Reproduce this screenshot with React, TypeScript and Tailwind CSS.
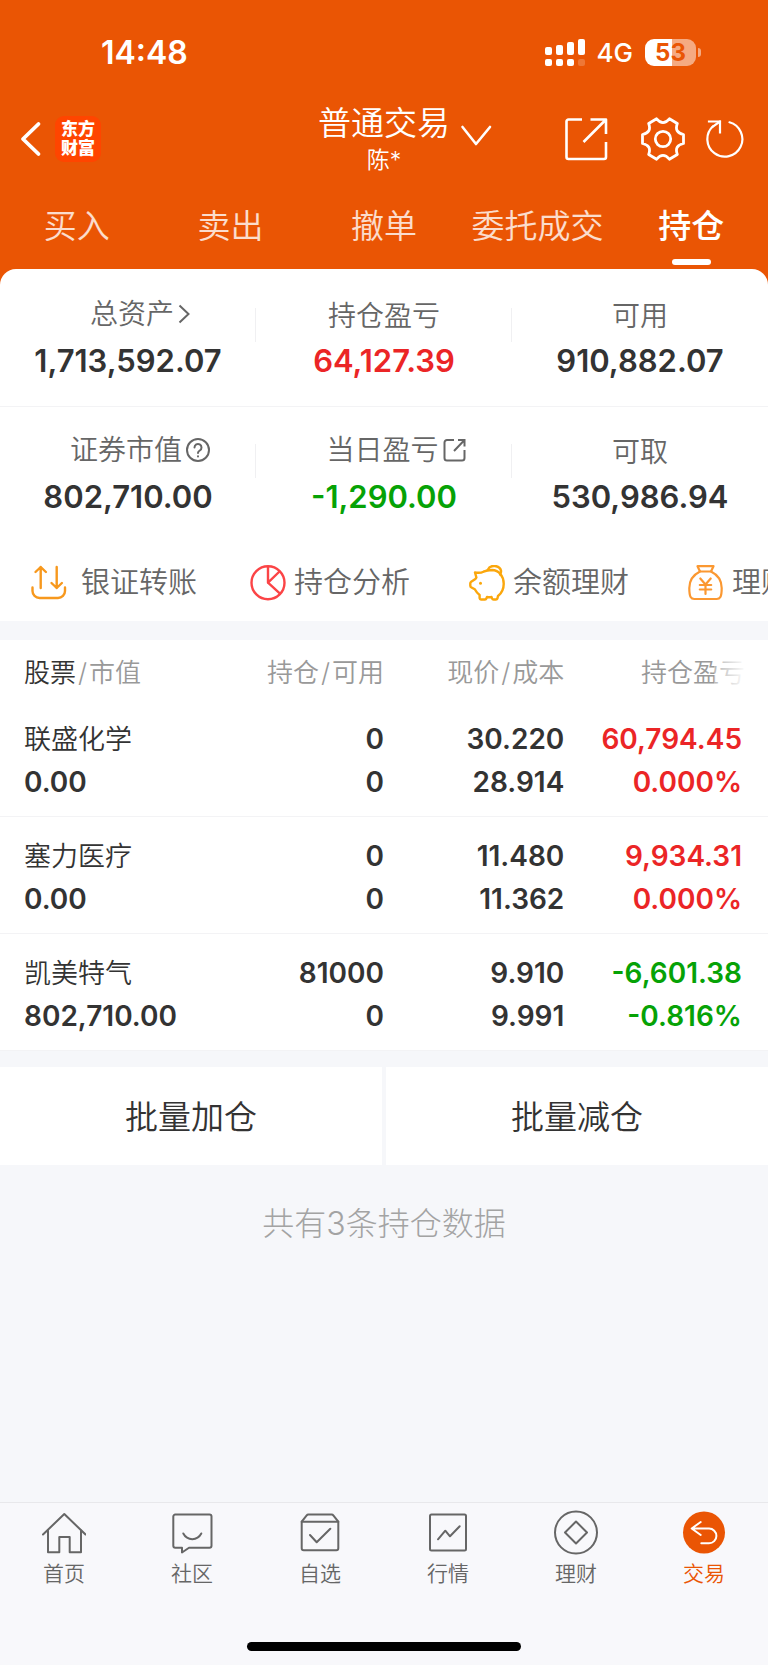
import type { ReactNode } from 'react'

type Tone = 'up' | 'down' | 'flat'

const toneClass: Record<Tone, string> = {
  up: 'text-[#eb2526]',
  down: 'text-[#06a206]',
  flat: 'text-[#333333]',
}

const tabs = ['买入', '卖出', '撤单', '委托成交', '持仓']

const holdings: {
  name: string
  value: string
  shares: string
  available: string
  price: string
  cost: string
  profit: string
  rate: string
  tone: Tone
}[] = [
  {
    name: '联盛化学',
    value: '0.00',
    shares: '0',
    available: '0',
    price: '30.220',
    cost: '28.914',
    profit: '60,794.45',
    rate: '0.000%',
    tone: 'up',
  },
  {
    name: '塞力医疗',
    value: '0.00',
    shares: '0',
    available: '0',
    price: '11.480',
    cost: '11.362',
    profit: '9,934.31',
    rate: '0.000%',
    tone: 'up',
  },
  {
    name: '凯美特气',
    value: '802,710.00',
    shares: '81000',
    available: '0',
    price: '9.910',
    cost: '9.991',
    profit: '-6,601.38',
    rate: '-0.816%',
    tone: 'down',
  },
]

const quickLinks = [
  { label: '银证转账', gap: 'gap-[14px]', icon: <TransferIcon /> },
  { label: '持仓分析', gap: 'gap-2', icon: <PieIcon /> },
  { label: '余额理财', gap: 'gap-2', icon: <PigIcon /> },
  { label: '理财', gap: 'gap-2', icon: <BagIcon /> },
]

const navItems = [
  {
    label: '首页',
    icon: (
      <>
        <path d="M1 24.5 22.3 4 43.5 24.5" />
        <path d="M6 20.5V42.3h11.3V27h10.4v15.3H39V20.5" />
      </>
    ),
  },
  {
    label: '社区',
    icon: (
      <>
        <path d="M5 4.5h34.500a2 2 0 0 1 2 2v29.200a2 2 0 0 1-2 2H19l-7 4.800v-4.800H5.300a2 2 0 0 1-2-2V6.500a2 2 0 0 1 2-2z" />
        <path d="M13.300 23.500c4 7.500 14 7.500 18 0" />
      </>
    ),
  },
  {
    label: '自选',
    icon: (
      <>
        <path d="M3.700 11.700 8.700 5.300a2 2 0 0 1 1.600-.8h23.400a2 2 0 0 1 1.600.8l5 6.400v26.600a2 2 0 0 1-2 2H5.700a2 2 0 0 1-2-2z" />
        <path d="M3.700 11.700h36.600M12 25l6.700 7.300 13.600-13.600" />
      </>
    ),
  },
  {
    label: '行情',
    icon: (
      <>
        <rect x="4" y="4.500" width="36" height="36" rx="1.500" />
        <path d="M12 29.300l7.300-8.600 4.700 5.600 9.700-10" />
      </>
    ),
  },
  {
    label: '理财',
    icon: (
      <>
        <circle cx="22" cy="22.500" r="21" />
        <path d="M22 11.500 33 22.500 22 33.500 11 22.500z" />
      </>
    ),
  },
  {
    label: '交易',
    active: true,
    icon: (
      <>
        <circle cx="22" cy="22.500" r="21" fill="#ea5504" stroke="none" />
        <path
          d="M18.700 12 9.700 18.500 18.700 25M9.700 18.500h17.300a7.400 7.400 0 0 1 0 14.800h-7.700"
          stroke="#ffffff"
        />
      </>
    ),
  },
]

function TransferIcon() {
  return (
    <svg width="36" height="36" viewBox="0 0 36 36" fill="none" stroke="#f7981d" strokeWidth="2.400" strokeLinecap="round" strokeLinejoin="round">
      <path d="M1.500 22.500v3.500a7 7 0 0 0 7 7h18.500a7 7 0 0 0 7-7v-3.500" />
      <path d="M9.700 23V2M4.500 7l5.200-5 5.200 5M25.700 2v21M20.500 18l5.200 5 5.200-5" />
    </svg>
  )
}

function PieIcon() {
  return (
    <svg width="36" height="36" viewBox="0 0 36 36" fill="none" stroke="#fb4446" strokeWidth="2.400" strokeLinejoin="round">
      <circle cx="18" cy="17.700" r="16.500" />
      <path d="M18 1.200v16.500L29.500 6.500M18 17.700l12 11" />
    </svg>
  )
}

function PigIcon() {
  return (
    <svg width="36" height="36" viewBox="0 0 36 36" fill="none" stroke="#fba70c" strokeWidth="2.400" strokeLinecap="round" strokeLinejoin="round">
      <path d="M6 7.500c3 .4 6 .5 8.500-.8C17 5.500 20 5 23 5c7 .3 11.500 6 11.700 13.500.1 5-2 9.500-5.700 12.500l-.6 2.500c-.3.800-.8 1-1.500 1h-2.400c-.8 0-1.200-.4-1.500-1.200l-.5-1.300c-1.500.3-3 .3-4.500 0l-.5 1.300c-.3.800-.7 1.200-1.500 1.200h-4c-.8 0-1.300-.5-1.400-1.300L10.600 30C8.500 28.500 7 26.500 5.800 24.300L2.500 22.500c-.8-.4-1.200-1-1.200-1.800v-2.400c0-.7.300-1.200.9-1.600L6 14.300c.5-.4 1-1 1.400-1.800z" />
      <path d="M18.700 4.900a7 6.200 0 0 1 13.400 1.100c0 1.400-.3 2.400-1 3.400" />
      <circle cx="11.500" cy="18.300" r="1.500" fill="#fba70c" stroke="none" />
    </svg>
  )
}

function BagIcon() {
  return (
    <svg width="36" height="36" viewBox="0 0 36 36" fill="none" stroke="#fb9831" strokeWidth="2.200" strokeLinecap="round" strokeLinejoin="round">
      <path d="M9.500 1.200h16l-2.500 5.300H12z" />
      <path d="M12 6.500C5 10 1.300 16 1.300 23c0 4 .3 7.200 1.300 9 .8 1.500 1.900 2 3.700 2h22.400c1.800 0 2.900-.5 3.700-2 1-1.800 1.300-5 1.300-9 0-7-3.700-13-10.700-16.500" />
      <path d="M12.300 13.500l5.200 6 5.200-6M17.500 19.500v9.500M11.800 20h11.400M11.800 24.500h11.400" />
    </svg>
  )
}

function StatusBar() {
  return (
    <div className="flex h-[100px] items-center justify-between pl-[101px] pr-[67px] pt-[5px] text-white">
      <span className="text-[32px] font-semibold leading-none">14:48</span>
      <div className="flex items-center">
        <svg width="40" height="28" viewBox="0 0 40 28" fill="#ffffff">
          <rect x="0" y="8" width="7" height="8" rx="2" />
          <rect x="11" y="6" width="7" height="10" rx="2" />
          <rect x="22" y="3" width="7" height="13" rx="2" />
          <rect x="33" y="0" width="7" height="16" rx="2" />
          <rect x="0" y="20" width="7" height="7" rx="2" />
          <rect x="11" y="20" width="7" height="7" rx="2" />
          <rect x="22" y="20" width="7" height="7" rx="2" />
          <rect x="33" y="20" width="7" height="7" rx="2" opacity="0.200" />
        </svg>
        <span className="ml-3 text-[26px] font-medium leading-none">4G</span>
        <span className="ml-3 flex h-[27px] w-[51px] items-center justify-center rounded-[9px] bg-linear-to-r from-white from-53% to-[#f5aa82] to-53% text-[24px] font-bold leading-none text-[#ea5504]">
          53
        </span>
        <span className="ml-[2px] h-[9px] w-[3px] rounded-r-full bg-[#f5aa82]" />
      </div>
    </div>
  )
}

function Header() {
  return (
    <header className="grid h-[76px] grid-cols-[1fr_auto_1fr] items-center text-white">
      <div className="flex items-center pl-5">
        <button type="button" aria-label="返回">
          <svg width="22" height="36" viewBox="0 0 22 36" fill="none" stroke="currentColor" strokeWidth="3.800" strokeLinecap="round" strokeLinejoin="round">
            <path d="M18.500 3 3 18l15.500 15" />
          </svg>
        </button>
        <div className="ml-[13px] flex size-[46px] flex-col items-center justify-center rounded-[9px] bg-[#ff4500] text-[17px] font-black leading-[19px]">
          <span>东方</span>
          <span>财富</span>
        </div>
      </div>
      <div className="flex flex-col items-center pt-[3px]">
        <h1 className="text-[33px] leading-[40px]">普通交易</h1>
        <p className="text-[23px] leading-[34px]">陈*</p>
      </div>
      <div className="flex items-center justify-between pl-[10px] pr-[23px]">
        <button type="button" aria-label="切换账户">
          <svg width="32" height="22" viewBox="0 0 32 22" fill="none" stroke="currentColor" strokeWidth="2.600" strokeLinecap="round" strokeLinejoin="round" className="mb-2">
            <path d="M2.500 3 16 20 30 3" />
          </svg>
        </button>
        <div className="flex items-center">
          <button type="button" aria-label="分享">
            <svg width="43" height="44" viewBox="0 0 43 44" fill="none" stroke="currentColor" strokeWidth="2.600" strokeLinejoin="round">
              <path d="M17 2.500H3.500a2 2 0 0 0-2 2V40a2 2 0 0 0 2 2H39a2 2 0 0 0 2-2V25" />
              <path d="M25.500 2.500H41V17M41 2.500 18.500 25" />
            </svg>
          </button>
          <button type="button" aria-label="设置" className="ml-[33px]">
            <svg width="44" height="44" viewBox="0 0 44 44" fill="none" stroke="currentColor" strokeWidth="2.800" strokeLinejoin="round">
              <path d="M42.500 17.500v9Q33 28.400 36.300 37.500L28.400 42.200Q22 34.700 15.600 42.200L7.700 37.500Q11 28.400 1.500 26.500v-9Q11 15.600 7.700 6.500L15.600 1.800Q22 9.300 28.400 1.800L36.300 6.500Q33 15.600 42.500 17.500Z" />
              <circle cx="22" cy="22" r="7.700" />
            </svg>
          </button>
          <button type="button" aria-label="刷新" className="ml-5">
            <svg width="40" height="42" viewBox="0 0 40 42" fill="none" stroke="currentColor" strokeWidth="2.200" strokeLinecap="round">
              <path d="M24.500 4.300A17.500 17.500 0 1 1 8 8.300" />
              <path d="M4 3.500h11v11" strokeLinecap="square" />
              <path d="M15 3.500 7.500 8.800" />
            </svg>
          </button>
        </div>
      </div>
    </header>
  )
}

function Stat({
  label,
  value,
  tone = 'flat',
  icon,
  divider = true,
}: {
  label: string
  value: string
  tone?: Tone
  icon?: ReactNode
  divider?: boolean
}) {
  return (
    <div className="relative flex flex-col items-center">
      <div className={`flex h-9 items-center gap-1 text-[28px] text-[#666666] ${icon ? 'pl-6' : 'pt-1'}`}>
        {label}
        {icon}
      </div>
      <p className={`mt-[7px] text-[31px] font-semibold leading-[44px] ${toneClass[tone]}`}>{value}</p>
      {divider && <span className="absolute right-0 top-3 h-[34px] w-px bg-[#f0f0f2]" />}
    </div>
  )
}

function Summary() {
  return (
    <section>
      <div className="grid h-[138px] grid-cols-3 border-b border-[#f3f3f5] pt-[27px]">
        <Stat
          label="总资产"
          value="1,713,592.07"
          icon={
            <svg width="12" height="20" viewBox="0 0 12 20" fill="none" stroke="currentColor" strokeWidth="2">
              <path d="M1.500 1.500 10.500 10l-9 8.500" />
            </svg>
          }
        />
        <Stat label="持仓盈亏" value="64,127.39" tone="up" />
        <Stat label="可用" value="910,882.07" divider={false} />
      </div>
      <div className="grid h-[134px] grid-cols-3 pt-[25px]">
        <Stat
          label="证券市值"
          value="802,710.00"
          icon={
            <svg width="24" height="24" viewBox="0 0 24 24" fill="none" stroke="currentColor" strokeWidth="2" strokeLinecap="round">
              <circle cx="12" cy="12" r="11" />
              <path d="M8.500 9.500a3.500 3.500 0 1 1 5.300 3c-1.200.7-1.800 1.200-1.800 2.500" />
              <path d="M12 18.200v.2" />
            </svg>
          }
        />
        <Stat
          label="当日盈亏"
          value="-1,290.00"
          tone="down"
          icon={
            <svg width="23" height="24" viewBox="0 0 23 24" fill="none" stroke="currentColor" strokeWidth="2">
              <path d="M11 2H4a2.500 2.500 0 0 0-2.500 2.500V20A2.500 2.500 0 0 0 4 22.500h15a2.500 2.500 0 0 0 2.500-2.500v-8" />
              <path d="M15 2h6.500v6.500M21.500 2 11 13" />
            </svg>
          }
        />
        <Stat label="可取" value="530,986.94" divider={false} />
      </div>
    </section>
  )
}

function HoldingsTable() {
  return (
    <table className="w-full table-fixed border-collapse bg-white">
      <thead>
        <tr className="h-[60px] text-right text-[26px] leading-[38px] text-[#999999]">
          <th className="w-[30%] pl-6 pt-[6px] text-left font-[350]">
            <span className="text-[#333333]">股票</span>
            <span className="mx-[2px]">/</span>市值
          </th>
          <th className="w-[20%] pt-[6px] font-[350]">
            持仓<span className="mx-[2px]">/</span>可用
          </th>
          <th className="w-[24%] pr-1 pt-[6px] font-[350]">
            现价<span className="mx-[2px]">/</span>成本
          </th>
          <th className="relative w-[26%] pr-[23px] pt-[6px] font-[350]">
            持仓盈亏
            <span className="absolute inset-y-0 right-0 w-[54px] bg-linear-to-r from-white/30 to-white to-60%" />
          </th>
        </tr>
      </thead>
      <tbody>
        {holdings.map((h) => (
          <tr
            key={h.name}
            className="border-b border-[#f3f3f5] text-right text-[28px] font-semibold leading-[43px] text-[#333333]"
          >
            <td className="pb-3 pl-6 pt-[18px] text-left">
              <p className="text-[27px] font-[350] leading-[43px]">{h.name}</p>
              <p>{h.value}</p>
            </td>
            <td className="pb-3 pt-[18px]">
              <p>{h.shares}</p>
              <p>{h.available}</p>
            </td>
            <td className="pb-3 pr-1 pt-[18px]">
              <p>{h.price}</p>
              <p>{h.cost}</p>
            </td>
            <td className={`pb-3 pr-[26px] pt-[18px] ${toneClass[h.tone]}`}>
              <p>{h.profit}</p>
              <p>{h.rate}</p>
            </td>
          </tr>
        ))}
      </tbody>
    </table>
  )
}

export default function App() {
  return (
    <div className="flex min-h-screen flex-col overflow-hidden bg-[#f6f7fa] font-[Inter,'Noto_Sans_CJK_SC',sans-serif] font-[350]">
      <div className="bg-[#ea5504]">
        <StatusBar />
        <Header />
        <nav className="grid h-[93px] grid-cols-5">
          {tabs.map((tab) => (
            <button
              key={tab}
              type="button"
              className={
                tab === '持仓'
                  ? 'flex flex-col items-center justify-between pb-1 pt-[25px] text-[33px] font-medium leading-[50px] text-white'
                  : 'flex flex-col items-center pt-[25px] text-[33px] leading-[50px] text-white/80'
              }
            >
              {tab}
              {tab === '持仓' && <span className="h-[6px] w-[39px] rounded-full bg-white" />}
            </button>
          ))}
        </nav>
        <div className="rounded-t-2xl bg-white">
          <Summary />
          <div className="flex h-20 overflow-hidden pl-[31px] pt-[3px]">
            {quickLinks.map((link) => (
              <button
                key={link.label}
                type="button"
                className={`flex w-[219px] shrink-0 items-center whitespace-nowrap text-[29px] text-[#666666] ${link.gap}`}
              >
                {link.icon}
                {link.label}
              </button>
            ))}
          </div>
        </div>
      </div>

      <main className="flex-1 pt-[19px]">
        <HoldingsTable />
        <div className="mt-4 grid grid-cols-2 gap-1 text-[33px] text-[#333333]">
          <button type="button" className="h-[98px] bg-white pt-1">
            批量加仓
          </button>
          <button type="button" className="h-[98px] bg-white pt-1">
            批量减仓
          </button>
        </div>
        <p className="mt-[35px] text-center text-[32px] font-light leading-[48px] text-[#a3a3a3]">
          共有3条持仓数据
        </p>
      </main>

      <footer className="border-t border-[#e8e8eb] bg-[#f8f8fb] pb-[14px]">
        <nav className="grid grid-cols-6">
          {navItems.map((item) => (
            <a
              key={item.label}
              href="#"
              className={`flex flex-col items-center pt-[7px] text-[21px] leading-[32px] ${
                item.active ? 'text-[#ea5504]' : 'text-[#666666]'
              }`}
            >
              <svg width="44" height="45" viewBox="0 0 44 45" fill="none" stroke="currentColor" strokeWidth="2" strokeLinecap="round" strokeLinejoin="round">
                {item.icon}
              </svg>
              <span className="mt-[3px]">{item.label}</span>
            </a>
          ))}
        </nav>
        <div className="mx-auto mt-[52px] h-[9px] w-[274px] rounded-full bg-black" />
      </footer>
    </div>
  )
}
